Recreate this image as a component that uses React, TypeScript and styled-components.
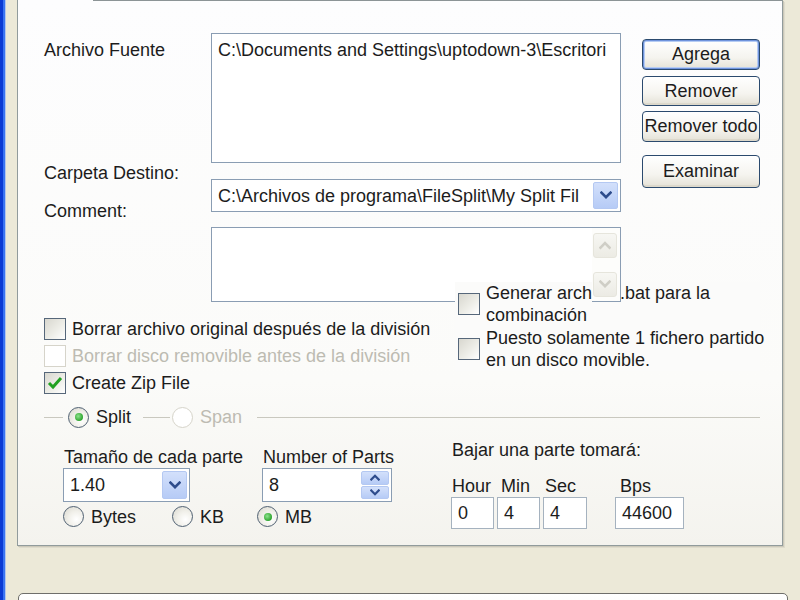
import React from "react";
import styled, { createGlobalStyle } from "styled-components";

const GlobalStyle = createGlobalStyle`
  html, body {
    margin: 0;
    padding: 0;
    background: #ece9d8;
    overflow: hidden;
  }
  body {
    font-family: "Liberation Sans", Arial, sans-serif;
    font-size: 18px;
    color: #1c1c1c;
  }
`;

type Check = {
  lines: string[];
  checked?: boolean;
  disabled?: boolean;
};

const leftChecks: Check[] = [
  { lines: ["Borrar archivo original después de la división"] },
  { lines: ["Borrar disco removible antes de la división"], disabled: true },
  { lines: ["Create Zip File"], checked: true },
];

const rightChecks: Check[] = [
  { lines: ["Generar archivo .bat para la", "combinación"] },
  { lines: ["Puesto solamente 1 fichero partido", "en un disco movible."] },
];

const buttons = [
  { label: "Agrega", mt: 38, h: 31, primary: true },
  { label: "Remover", mt: 6, h: 30 },
  { label: "Remover todo", mt: 5, h: 31 },
  { label: "Examinar", mt: 13, h: 33 },
];

const timeFields = [
  { label: "Hour", value: "0", width: 43, indent: 1 },
  { label: "Min", value: "4", width: 43, indent: 4 },
  { label: "Sec", value: "4", width: 44, indent: 2 },
  { label: "Bps", value: "44600", width: 69, indent: 5 },
];

const Frame = styled.div`
  width: 800px;
  height: 600px;
  box-sizing: border-box;
  padding-left: 17px;
  display: flex;
  flex-direction: column;
  overflow: hidden;
  background: linear-gradient(
    to right,
    #0b3ad4 0,
    #0b3ad4 3px,
    #3a74f2 3px,
    #3a74f2 5px,
    #b3c6ee 5px,
    #b3c6ee 6px,
    #ece9d8 6px
  );
`;

const Panel = styled.section`
  flex: none;
  width: 766px;
  height: 546px;
  box-sizing: border-box;
  border: 1px solid #919b9c;
  border-top: none;
  background: linear-gradient(#fdfdfe, #fbfbf9 70%, #f4f3ee);
  box-shadow: 1px 1px 0 #cbc8b9, 2px 2px 0 #dedbcc;
  display: flex;
  flex-direction: column;
`;

const TabEdge = styled.div`
  display: flex;
  height: 1px;
  flex: none;
`;

const TabGap = styled.div`
  width: 75px;
`;

const TabLine = styled.div`
  flex: 1;
  background: #8c9496;
`;

const Body = styled.div`
  padding: 0 22px 0 26px;
  display: flex;
  flex-direction: column;
`;

const TopRow = styled.div`
  display: flex;
  align-items: flex-start;
`;

const LabelCol = styled.div`
  flex: none;
  width: 167px;
  display: flex;
  flex-direction: column;
`;

const FieldLabel = styled.div<{ $mt: number }>`
  margin-top: ${(p) => p.$mt}px;
  height: 22px;
  line-height: 22px;
  white-space: nowrap;
`;

const FieldCol = styled.div`
  flex: none;
  width: 410px;
  display: flex;
  flex-direction: column;
`;

const ListBox = styled.div`
  margin-top: 32px;
  height: 130px;
  box-sizing: border-box;
  border: 1px solid #8a9db3;
  background: #fff;
  padding: 5px 6px;
  line-height: 22px;
  white-space: nowrap;
  overflow: hidden;
`;

const Combo = styled.div<{ $mt: number; $w?: number; $h: number }>`
  margin-top: ${(p) => p.$mt}px;
  width: ${(p) => (p.$w ? `${p.$w}px` : "auto")};
  height: ${(p) => p.$h}px;
  box-sizing: border-box;
  border: 1px solid #8a9db3;
  background: #fff;
  display: flex;
  align-items: center;
  padding-left: 6px;
`;

const ComboText = styled.span`
  flex: 1;
  white-space: nowrap;
  overflow: hidden;
  line-height: 22px;
`;

const DropButton = styled.span<{ $h: number }>`
  width: 25px;
  height: ${(p) => p.$h}px;
  margin-right: 2px;
  box-sizing: border-box;
  border: 1px solid #b4c8f2;
  border-radius: 2px;
  background: linear-gradient(#d3e0fb, #b6cbf6);
  display: flex;
  align-items: center;
  justify-content: center;
  flex: none;
`;

const SpinStack = styled.span`
  width: 28px;
  height: 28px;
  margin-right: 2px;
  display: flex;
  flex-direction: column;
  gap: 1px;
  flex: none;
`;

const SpinHalf = styled.span`
  flex: 1;
  box-sizing: border-box;
  border: 1px solid #b4c8f2;
  border-radius: 2px;
  background: linear-gradient(#d3e0fb, #b6cbf6);
  display: flex;
  align-items: center;
  justify-content: center;
`;

const CommentBox = styled.div`
  margin-top: 15px;
  height: 75px;
  display: flex;
`;

const CommentText = styled.div`
  flex: 1;
  border: 1px solid #8a9db3;
  border-right: none;
  background: #fff;
`;

const ScrollCol = styled.div`
  position: relative;
  z-index: 2;
  width: 29px;
  box-sizing: border-box;
  border: 1px solid #8a9db3;
  border-left: none;
  background: #fdfdfb;
  display: flex;
  flex-direction: column;
  justify-content: space-between;
  padding: 5px 3px 4px 1px;
`;

const ScrollButton = styled.span`
  height: 25px;
  box-sizing: border-box;
  border: 1px solid #e6e5dc;
  border-radius: 3px;
  background: linear-gradient(#f7f7f3, #ecebe4);
  display: flex;
  align-items: center;
  justify-content: center;
`;

const ButtonCol = styled.div`
  flex: none;
  margin-left: 21px;
  width: 118px;
  display: flex;
  flex-direction: column;
`;

const PushButton = styled.div<{ $mt: number; $h: number; $primary?: boolean }>`
  margin-top: ${(p) => p.$mt}px;
  height: ${(p) => p.$h}px;
  box-sizing: border-box;
  border: 1px solid #2b4a6e;
  border-radius: 4px;
  background: linear-gradient(#ffffff, #f5f4ef 60%, #e4e1d6);
  box-shadow: ${(p) =>
    p.$primary
      ? "inset 0 0 0 1px #6f93dc, inset 0 0 0 2px #b6ccf3"
      : "inset 0 -2px 0 #dcd8cb"};
  display: flex;
  align-items: center;
  justify-content: center;
  white-space: nowrap;
`;

const CheckRow = styled.div`
  display: flex;
  align-items: flex-start;
`;

const LeftChecks = styled.div`
  flex: none;
  margin-top: 13px;
  width: 411px;
  display: flex;
  flex-direction: column;
`;

const RightChecks = styled.div`
  margin-top: -20px;
  flex: 1;
  min-width: 0;
  padding-left: 3px;
  background: #fbfbfa;
  display: flex;
  flex-direction: column;
  gap: 1px;
`;

const CheckItem = styled.div<{ $h: number; $disabled?: boolean }>`
  height: ${(p) => p.$h}px;
  display: flex;
  align-items: center;
  gap: 6px;
  color: ${(p) => (p.$disabled ? "#bdbbb2" : "inherit")};
`;

const CheckText = styled.span`
  line-height: 22px;
  white-space: nowrap;
`;

const CheckBox = styled.span<{ $disabled?: boolean }>`
  width: 22px;
  height: 22px;
  box-sizing: border-box;
  flex: none;
  border: 1px solid ${(p) => (p.$disabled ? "#d6d4ca" : "#56677a")};
  background: ${(p) =>
    p.$disabled
      ? "#fff"
      : "linear-gradient(135deg, #d8d7cf 0%, #ededE7 55%, #ffffff 100%)"};
  display: flex;
  align-items: center;
  justify-content: center;
`;

const GroupHeader = styled.div`
  margin-top: 10px;
  height: 22px;
  display: flex;
  align-items: center;
`;

const GroupLine = styled.span<{ $w?: number; $ml: number; $mr: number }>`
  height: 1px;
  background: #c9c8bf;
  margin-left: ${(p) => p.$ml}px;
  margin-right: ${(p) => p.$mr}px;
  width: ${(p) => (p.$w ? `${p.$w}px` : "auto")};
  flex: ${(p) => (p.$w ? "none" : "1")};
`;

const RadioOption = styled.span<{ $disabled?: boolean }>`
  display: flex;
  align-items: center;
  gap: 7px;
  line-height: 22px;
  color: ${(p) => (p.$disabled ? "#bdbbb2" : "inherit")};
`;

const RadioCircle = styled.span<{ $disabled?: boolean }>`
  width: 21px;
  height: 21px;
  box-sizing: border-box;
  border-radius: 50%;
  flex: none;
  border: 1.5px solid ${(p) => (p.$disabled ? "#d6d4ca" : "#4f6072")};
  background: ${(p) =>
    p.$disabled
      ? "#fff"
      : "radial-gradient(circle at 65% 65%, #ffffff 0%, #f1f0ea 45%, #d6d5cc 100%)"};
  display: flex;
  align-items: center;
  justify-content: center;
`;

const RadioDot = styled.span`
  width: 8px;
  height: 8px;
  border-radius: 50%;
  background: radial-gradient(circle at 40% 40%, #8ee38e, #2ea52e 70%, #1d8a1d);
`;

const BottomRow = styled.div`
  display: flex;
  align-items: flex-start;
`;

const SizeBlock = styled.div`
  flex: none;
  margin-left: 19px;
  padding-top: 18px;
  width: 329px;
  display: grid;
  grid-template-columns: 199px 130px;
  grid-template-rows: 22px 34px;
`;

const SmallLabel = styled.div<{ $indent: number }>`
  padding-left: ${(p) => p.$indent}px;
  line-height: 22px;
  white-space: nowrap;
`;

const UnitRow = styled.div`
  grid-column: 1 / span 2;
  margin-top: 3px;
  height: 23px;
  display: grid;
  grid-template-columns: 109px 85px auto;
  align-items: center;
`;

const TimeBlock = styled.div`
  flex: none;
  margin-left: 59px;
  padding-top: 11px;
  display: flex;
  flex-direction: column;
`;

const TimeGrid = styled.div`
  margin-top: 14px;
  display: grid;
  grid-template-columns: 46px 46px 72px 69px;
  grid-template-rows: 22px 32px;
`;

const TimeInput = styled.div<{ $w: number }>`
  width: ${(p) => p.$w}px;
  height: 32px;
  box-sizing: border-box;
  border: 1px solid #a5b2bf;
  background: #fff;
  padding-left: 6px;
  line-height: 30px;
`;

const BottomBox = styled.div`
  flex: none;
  margin-top: 47px;
  margin-left: 1px;
  width: 770px;
  height: 30px;
  box-sizing: border-box;
  border: 1px solid #6e6e6a;
  border-radius: 5px 5px 0 0;
  background: linear-gradient(#ffffff, #f8f8f5);
`;

const Chevron = ({ dir, color, size = 12 }: { dir: "up" | "down"; color: string; size?: number }) => (
  <svg width={size} height={size * 0.7} viewBox="0 0 12 8">
    <polyline
      points={dir === "down" ? "1.5,1.5 6,6 10.5,1.5" : "1.5,6.5 6,2 10.5,6.5"}
      fill="none"
      stroke={color}
      strokeWidth="2.6"
      strokeLinecap="square"
    />
  </svg>
);

const Tick = () => (
  <svg width="16" height="14" viewBox="0 0 16 14">
    <polyline points="2,7 6,11 14,2" fill="none" stroke="#21a121" strokeWidth="3" />
  </svg>
);

function CheckOption({ item, h }: { item: Check; h: number }) {
  return (
    <CheckItem $h={h} $disabled={item.disabled}>
      <CheckBox $disabled={item.disabled}>{item.checked && <Tick />}</CheckBox>
      <CheckText>
        {item.lines.map((line, idx) => (
          <React.Fragment key={idx}>
            {idx > 0 && <br />}
            {line}
          </React.Fragment>
        ))}
      </CheckText>
    </CheckItem>
  );
}

function Radio({ label, checked, disabled }: { label: string; checked?: boolean; disabled?: boolean }) {
  return (
    <RadioOption $disabled={disabled}>
      <RadioCircle $disabled={disabled}>{checked && <RadioDot />}</RadioCircle>
      {label}
    </RadioOption>
  );
}

function App() {
  return (
    <Frame>
      <GlobalStyle />
      <Panel>
        <TabEdge>
          <TabGap />
          <TabLine />
        </TabEdge>
        <Body>
          <TopRow>
            <LabelCol>
              <FieldLabel $mt={38}>Archivo Fuente</FieldLabel>
              <FieldLabel $mt={101}>Carpeta Destino:</FieldLabel>
              <FieldLabel $mt={16}>Comment:</FieldLabel>
            </LabelCol>
            <FieldCol>
              <ListBox>C:\Documents and Settings\uptodown-3\Escritori</ListBox>
              <Combo $mt={16} $h={33}>
                <ComboText>C:\Archivos de programa\FileSplit\My Split Fil</ComboText>
                <DropButton $h={27}>
                  <Chevron dir="down" color="#2e4c8c" />
                </DropButton>
              </Combo>
              <CommentBox>
                <CommentText />
                <ScrollCol>
                  <ScrollButton>
                    <Chevron dir="up" color="#cfcec6" />
                  </ScrollButton>
                  <ScrollButton>
                    <Chevron dir="down" color="#cfcec6" />
                  </ScrollButton>
                </ScrollCol>
              </CommentBox>
            </FieldCol>
            <ButtonCol>
              {buttons.map((b) => (
                <PushButton key={b.label} $mt={b.mt} $h={b.h} $primary={b.primary}>
                  {b.label}
                </PushButton>
              ))}
            </ButtonCol>
          </TopRow>

          <CheckRow>
            <LeftChecks>
              {leftChecks.map((c, idx) => (
                <CheckOption key={idx} item={c} h={27} />
              ))}
            </LeftChecks>
            <RightChecks>
              {rightChecks.map((c, idx) => (
                <CheckOption key={idx} item={c} h={44} />
              ))}
            </RightChecks>
          </CheckRow>

          <GroupHeader>
            <GroupLine $w={19} $ml={0} $mr={5} />
            <Radio label="Split" checked />
            <GroupLine $w={27} $ml={12} $mr={2} />
            <Radio label="Span" disabled />
            <GroupLine $ml={15} $mr={0} />
          </GroupHeader>

          <BottomRow>
            <SizeBlock>
              <SmallLabel $indent={1}>Tamaño de cada parte</SmallLabel>
              <SmallLabel $indent={1}>Number of Parts</SmallLabel>
              <Combo $mt={0} $w={127} $h={34}>
                <ComboText>1.40</ComboText>
                <DropButton $h={28}>
                  <Chevron dir="down" color="#2e4c8c" />
                </DropButton>
              </Combo>
              <Combo $mt={0} $w={130} $h={34}>
                <ComboText>8</ComboText>
                <SpinStack>
                  <SpinHalf>
                    <Chevron dir="up" color="#2e4c8c" size={10} />
                  </SpinHalf>
                  <SpinHalf>
                    <Chevron dir="down" color="#2e4c8c" size={10} />
                  </SpinHalf>
                </SpinStack>
              </Combo>
              <UnitRow>
                <Radio label="Bytes" />
                <Radio label="KB" />
                <Radio label="MB" checked />
              </UnitRow>
            </SizeBlock>
            <TimeBlock>
              <SmallLabel $indent={1}>Bajar una parte tomará:</SmallLabel>
              <TimeGrid>
                {timeFields.map((f) => (
                  <SmallLabel key={f.label} $indent={f.indent}>
                    {f.label}
                  </SmallLabel>
                ))}
                {timeFields.map((f) => (
                  <TimeInput key={f.label} $w={f.width}>
                    {f.value}
                  </TimeInput>
                ))}
              </TimeGrid>
            </TimeBlock>
          </BottomRow>
        </Body>
      </Panel>
      <BottomBox />
    </Frame>
  );
}

export default App;
